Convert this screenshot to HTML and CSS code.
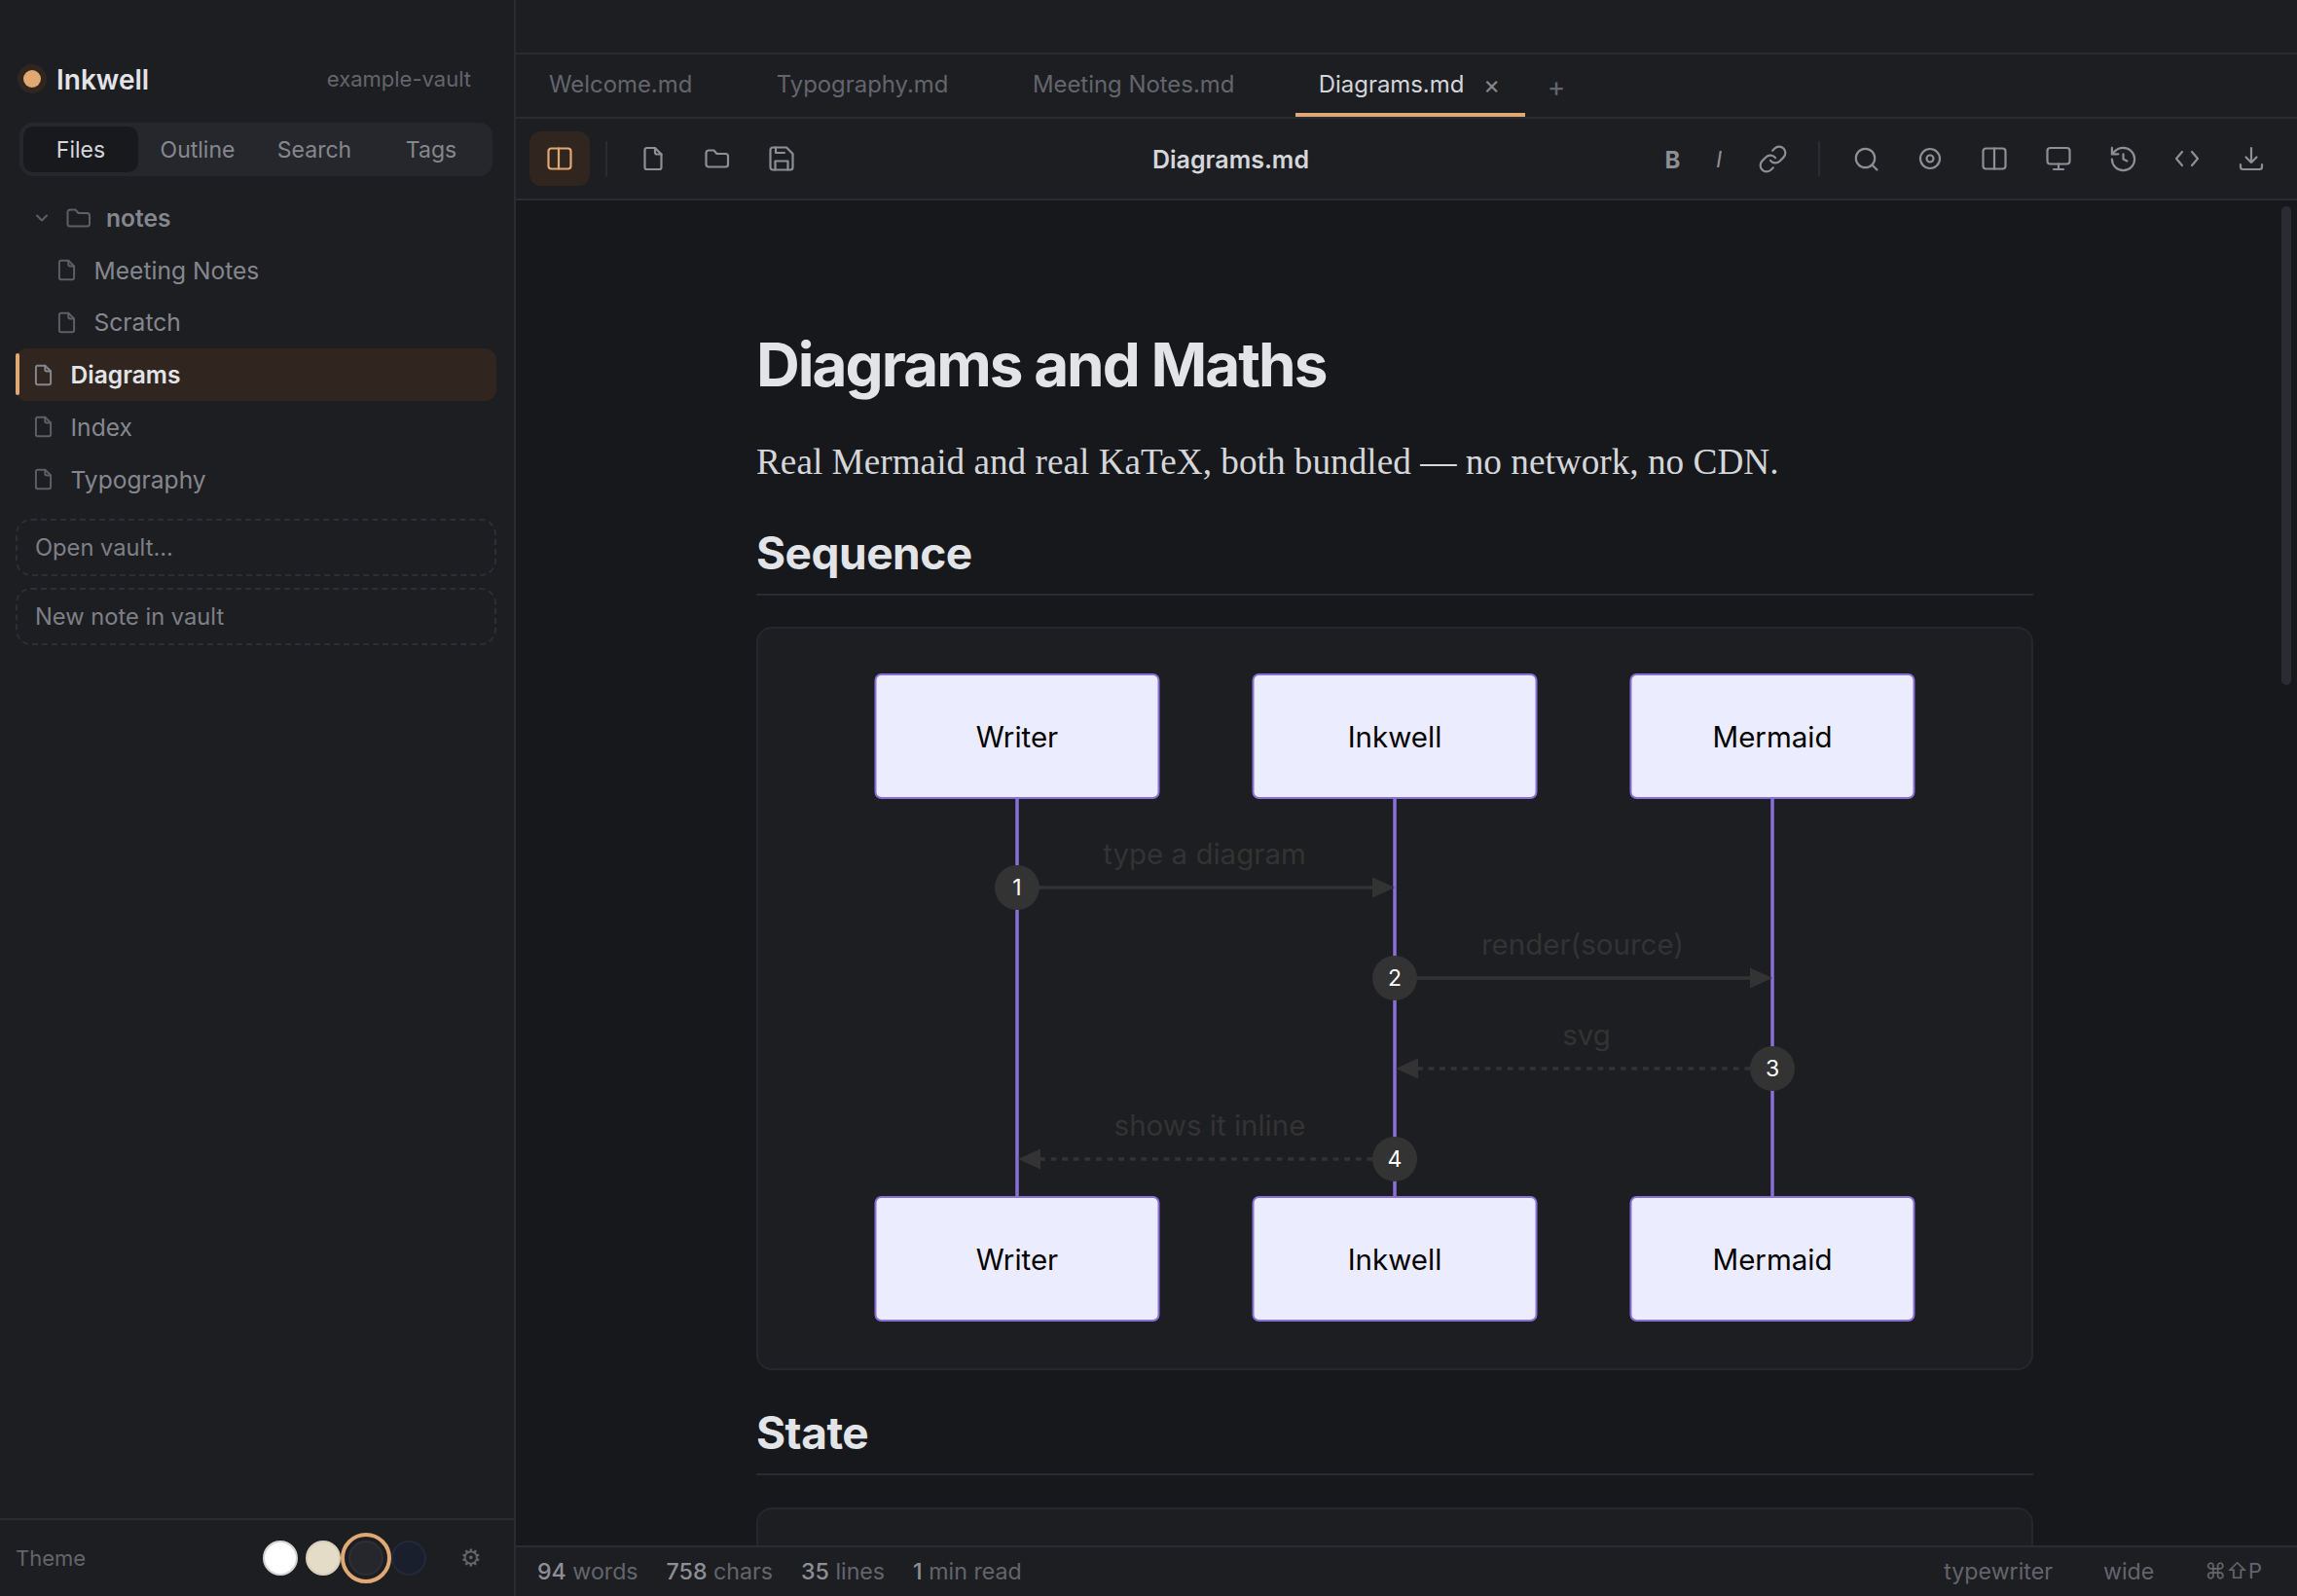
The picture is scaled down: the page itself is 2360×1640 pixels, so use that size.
FILE: index.html
```html
<!DOCTYPE html>
<html lang="en">
<head>
<meta charset="utf-8">
<title>Inkwell</title>
<link rel="stylesheet" href="styles.css">
</head>
<body>
<svg class="defs" width="0" height="0" aria-hidden="true">
  <symbol id="i-file" viewBox="0 0 28 28"><path d="M16 3H7.5a2 2 0 0 0-2 2v18a2 2 0 0 0 2 2h13a2 2 0 0 0 2-2V9.5z"/><path d="M16 3v4.5a2 2 0 0 0 2 2h4.5"/></symbol>
  <symbol id="i-folder" viewBox="0 0 28 28"><path d="M2.5 8A2.5 2.5 0 0 1 5 5.500h5.500l3 3.500h9A2.500 2.500 0 0 1 25 11.500V20a2.500 2.500 0 0 1-2.500 2.500H5A2.500 2.500 0 0 1 2.500 20z"/></symbol>
</svg>
<div class="app">
  <aside class="sidebar">
    <div class="brand">
      <span class="brand-dot"></span>
      <span class="brand-name">Inkwell</span>
      <span class="brand-vault">example-vault</span>
    </div>
    <div class="side-tabs">
      <div class="side-tab is-active">Files</div>
      <div class="side-tab">Outline</div>
      <div class="side-tab">Search</div>
      <div class="side-tab">Tags</div>
    </div>
    <div class="tree">
      <div class="row row-folder">
        <svg class="ic-chev" viewBox="0 0 12 8"><path d="M1 1.500l5 5 5-5"/></svg>
        <svg class="ic-folder"><use href="#i-folder"/></svg>
        <span>notes</span>
      </div>
      <div class="row row-nested"><svg class="ic-file"><use href="#i-file"/></svg><span>Meeting Notes</span></div>
      <div class="row row-nested"><svg class="ic-file"><use href="#i-file"/></svg><span>Scratch</span></div>
      <div class="row is-active"><svg class="ic-file"><use href="#i-file"/></svg><span>Diagrams</span></div>
      <div class="row"><svg class="ic-file"><use href="#i-file"/></svg><span>Index</span></div>
      <div class="row"><svg class="ic-file"><use href="#i-file"/></svg><span>Typography</span></div>
    </div>
    <div class="dashed dashed-first">Open vault...</div>
    <div class="dashed">New note in vault</div>
    <div class="side-foot">
      <span class="theme-label">Theme</span>
      <div class="swatches">
        <span class="swatch sw-white"></span>
        <span class="swatch sw-cream"></span>
        <span class="swatch sw-dark"></span>
        <span class="swatch sw-navy"></span>
      </div>
      <span class="gear">⚙</span>
    </div>
  </aside>
  <main class="main">
    <div class="topstrip"></div>
    <div class="tabbar">
      <div class="tab">Welcome.md<span class="tab-x"></span></div>
      <div class="tab">Typography.md<span class="tab-x"></span></div>
      <div class="tab">Meeting Notes.md<span class="tab-x"></span></div>
      <div class="tab is-active">Diagrams.md<span class="tab-x">×</span></div>
      <div class="tab-add">+</div>
    </div>
    <div class="toolbar">
      <div class="tool-group">
        <div class="tool is-on"><svg class="ico" viewBox="0 0 28 28"><rect x="2.500" y="3.500" width="23" height="21" rx="3"/><path d="M13 3.500v21"/></svg></div>
        <div class="tool-sep"></div>
        <div class="tool"><svg class="ico"><use href="#i-file"/></svg></div>
        <div class="tool"><svg class="ico"><use href="#i-folder"/></svg></div>
        <div class="tool"><svg class="ico" viewBox="0 0 28 28"><path d="M5 2.500h14l6.500 6.500v14a2.500 2.500 0 0 1-2.500 2.500H5A2.500 2.500 0 0 1 2.500 23V5A2.500 2.500 0 0 1 5 2.500z"/><path d="M7.500 25.500v-9h13v9"/><path d="M8 2.500V8h9"/></svg></div>
      </div>
      <div class="doc-title">Diagrams.md</div>
      <div class="tool-group">
        <div class="tool tool-b">B</div>
        <div class="tool tool-i">I</div>
        <div class="tool"><svg class="ico ico-lg" viewBox="0 0 24 24"><path d="M10 13a5 5 0 0 0 7.540.540l3-3a5 5 0 0 0-7.070-7.070l-1.720 1.710"/><path d="M14 11a5 5 0 0 0-7.540-.540l-3 3a5 5 0 0 0 7.070 7.070l1.710-1.710"/></svg></div>
        <div class="tool-sep"></div>
        <div class="tool"><svg class="ico" viewBox="0 0 28 28"><circle cx="13.500" cy="13.500" r="9.700"/><path d="M20.500 20.500l5 5"/></svg></div>
        <div class="tool"><svg class="ico" viewBox="0 0 28 28"><circle cx="14" cy="14" r="10"/><circle cx="14" cy="14" r="3.500"/></svg></div>
        <div class="tool"><svg class="ico" viewBox="0 0 28 28"><rect x="2.500" y="3.500" width="23" height="21" rx="3"/><path d="M14 3.500v21"/></svg></div>
        <div class="tool"><svg class="ico" viewBox="0 0 28 28"><rect x="2.500" y="3" width="23" height="16.500" rx="3"/><path d="M14 19.500V25M9 25h10"/></svg></div>
        <div class="tool"><svg class="ico ico-lg" viewBox="0 0 24 24"><path d="M3 12a9 9 0 1 0 9-9 9.750 9.750 0 0 0-6.740 2.740L3 8"/><path d="M3 3v5h5"/><path d="M12 8v4l3 1.500"/></svg></div>
        <div class="tool"><svg class="ico" viewBox="0 0 28 28"><path d="M9 7l-6 7 6 7M19 7l6 7-6 7"/></svg></div>
        <div class="tool"><svg class="ico" viewBox="0 0 28 28"><path d="M14 3v15M8.500 12.500L14 18l5.500-5.500"/><path d="M3 20v2.500A2.500 2.500 0 0 0 5.500 25h17a2.500 2.500 0 0 0 2.500-2.500V20"/></svg></div>
      </div>
    </div>
    <div class="scroll">
      <article class="doc">
        <h1>Diagrams and Maths</h1>
        <p>Real Mermaid and real KaTeX, both bundled — no network, no CDN.</p>
        <h2>Sequence</h2>
        <div class="card card-seq">
          <svg class="seq" viewBox="0 0 1308 760" width="1308" height="760">
            <line class="life" x1="266" y1="174" x2="266" y2="584"/>
            <line class="life" x1="654" y1="174" x2="654" y2="584"/>
            <line class="life" x1="1042" y1="174" x2="1042" y2="584"/>
            <rect class="actor" x="120.500" y="47" width="291" height="127" rx="6"/>
            <rect class="actor" x="508.500" y="47" width="291" height="127" rx="6"/>
            <rect class="actor" x="896.500" y="47" width="291" height="127" rx="6"/>
            <rect class="actor" x="120.500" y="584" width="291" height="127" rx="6"/>
            <rect class="actor" x="508.500" y="584" width="291" height="127" rx="6"/>
            <rect class="actor" x="896.500" y="584" width="291" height="127" rx="6"/>
            <text class="actor-t" x="266" y="122">Writer</text>
            <text class="actor-t" x="654" y="122">Inkwell</text>
            <text class="actor-t" x="1042" y="122">Mermaid</text>
            <text class="actor-t" x="266" y="659">Writer</text>
            <text class="actor-t" x="654" y="659">Inkwell</text>
            <text class="actor-t" x="1042" y="659">Mermaid</text>
            <text class="msg-t" x="458.500" y="242">type a diagram</text>
            <text class="msg-t" x="847" y="335">render(source)</text>
            <text class="msg-t" x="851" y="428">svg</text>
            <text class="msg-t" x="464" y="521">shows it inline</text>
            <line class="msg" x1="266" y1="266" x2="632" y2="266"/>
            <polygon class="head" points="631,255.500 654,266 631,276.500"/>
            <line class="msg" x1="654" y1="359" x2="1021" y2="359"/>
            <polygon class="head" points="1019,348.500 1042,359 1019,369.500"/>
            <line class="msg msg-dash" x1="677" y1="452" x2="1042" y2="452"/>
            <polygon class="head" points="678,441.500 655,452 678,462.500"/>
            <line class="msg msg-dash" x1="289" y1="545" x2="654" y2="545"/>
            <polygon class="head" points="290,534.500 267,545 290,555.500"/>
            <circle class="num" cx="266" cy="266" r="23"/>
            <circle class="num" cx="654" cy="359" r="23"/>
            <circle class="num" cx="1042" cy="452" r="23"/>
            <circle class="num" cx="654" cy="545" r="23"/>
            <text class="num-t" x="266" y="274">1</text>
            <text class="num-t" x="654" y="367">2</text>
            <text class="num-t" x="1042" y="460">3</text>
            <text class="num-t" x="654" y="553">4</text>
          </svg>
        </div>
        <h2 class="h2-state">State</h2>
        <div class="card card-next"></div>
      </article>
      <div class="thumb"></div>
    </div>
    <div class="status">
      <div class="stat-group">
        <span class="stat"><b>94</b> words</span>
        <span class="stat"><b>758</b> chars</span>
        <span class="stat"><b>35</b> lines</span>
        <span class="stat"><b>1</b> min read</span>
      </div>
      <div class="stat-group stat-right">
        <span class="stat">typewriter</span>
        <span class="stat">wide</span>
        <span class="stat stat-keys">⌘⇧P</span>
      </div>
    </div>
  </main>
</div>
</body>
</html>
```
FILE: styles.css
```css
* { box-sizing: border-box; }
html, body { margin: 0; padding: 0; height: 100%; }
body { background: #17181c; font-family: "Inter", "Liberation Sans", sans-serif; color: #8c8e95; overflow: hidden; }
.defs { position: absolute; }
svg { fill: none; stroke: currentColor; stroke-width: 2.200; stroke-linecap: round; stroke-linejoin: round; }
.app { display: flex; height: 1640px; }

.sidebar { width: 530px; flex: none; display: flex; flex-direction: column; background: #1d1e22; border-right: 2px solid #2b2c33; }
.brand { display: flex; align-items: center; height: 34px; margin-top: 64px; padding: 0 44px 0 24px; }
.brand-dot { width: 18px; height: 18px; border-radius: 50%; background: #e0a872; box-shadow: 0 0 0 6px #30261f; flex: none; }
.brand-name { margin-left: 16px; padding-top: 1px; font-size: 28px; font-weight: 600; color: #e3e4e8; }
.brand-vault { margin-left: auto; font-size: 22px; color: #63656c; }
.side-tabs { display: flex; gap: 2px; height: 55px; margin: 28px 22px 0 20px; padding: 4px; border-radius: 14px; background: #26272c; }
.side-tab { flex: 1; display: flex; align-items: center; justify-content: center; font-size: 23px; color: #85878e; border-radius: 10px; }
.side-tab.is-active { background: #18191d; color: #d5d6da; }

.tree { margin-top: 16px; padding-right: 18px; padding-left: 16px; }
.row { position: relative; display: flex; align-items: center; height: 53.750px; padding-left: 20px; font-size: 24.600px; color: #85878e; border-radius: 12px; }
.row .ic-file { margin-left: -4px; margin-right: 15.500px; color: #5d5f66; }
.ic-file { width: 25px; height: 25px; flex: none; }
.row-nested { padding-left: 44px; }
.row-folder { padding-left: 21px; font-weight: 600; color: #85878e; }
.ic-chev { width: 12px; height: 8px; margin-right: 19.500px; color: #5d5f66; stroke-width: 2; }
.ic-folder { width: 28px; height: 28px; margin-right: 14.500px; margin-left: -2px; color: #5d5f66; stroke-width: 2; }
.row.is-active { background: #30261f; color: #e3e4e8; font-weight: 600; }
.row.is-active .ic-file { color: #85878e; }
.row.is-active::before { content: ""; position: absolute; left: 0; top: 5px; bottom: 6px; width: 4px; border-radius: 2px; background: #e0a872; }

.dashed { display: flex; align-items: center; height: 59px; margin: 12px 18px 0 16px; padding-left: 18px; font-size: 23.700px; color: #7e8087; border: 2px dashed #2e2f35; border-radius: 16px; }
.dashed-first { margin-top: 13.500px; }
.side-foot { display: flex; align-items: center; height: 80px; margin-top: auto; padding: 0 0 0 16px; border-top: 2px solid #2b2c33; }
.theme-label { font-size: 22px; color: #63656c; width: 254px; }
.swatches { display: flex; gap: 8px; }
.swatch { width: 36px; height: 36px; border-radius: 50%; border: 2px solid transparent; }
.sw-white { background: #fff; border-color: #d5d5d2; }
.sw-cream { background: #e5dcc8; border-color: #d8cfbc; }
.sw-dark { background: #26272c; border-color: #2e2f35; outline: 4px solid #e0a872; outline-offset: 4px; }
.sw-navy { background: #1a1f2e; border-color: #23283a; }
.gear { margin-left: 35px; font-size: 24px; color: #63656c; font-family: "DejaVu Sans", sans-serif; }

.main { flex: 1; min-width: 0; display: flex; flex-direction: column; }
.topstrip { height: 56px; flex: none; background: #1d1e22; border-bottom: 2px solid #2b2c33; }
.tabbar { height: 66px; flex: none; display: flex; padding-left: 10px; background: #1d1e22; border-bottom: 2px solid #2b2c33; }
.tab { display: flex; align-items: center; height: 64px; padding: 0 24px; font-size: 23.900px; color: #63656c; border-bottom: 4px solid transparent; }
.tab.is-active { color: #d5d6da; border-bottom-color: #e0a872; }
.tab-x { width: 38.500px; padding-right: 1.500px; text-align: right; font-size: 26px; color: #85878e; }
.tab-add { align-self: center; margin-left: 23px; padding-top: 2px; font-size: 28px; color: #63656c; }

.toolbar { height: 84px; flex: none; display: flex; align-items: center; padding: 0 16px 0 14px; background: #1d1e22; border-bottom: 2px solid #2b2c33; }
.tool-group { display: flex; align-items: center; gap: 4px; }
.tool { width: 62px; height: 56px; display: flex; align-items: center; justify-content: center; border-radius: 12px; color: #8d8f96; }
.tool.is-on { background: #30261f; color: #e0a872; }
.tool-sep { width: 2px; height: 36px; margin: 0 12px; background: #2b2c33; }
.tool-b { width: 47px; padding-top: 2px; font-size: 24px; font-weight: 700; }
.tool-i { width: 40px; padding-top: 2px; font-size: 23px; font-style: italic; }
.ico { width: 28px; height: 28px; }
.ico-lg { width: 31px; height: 31px; stroke-width: 1.700; }
.doc-title { flex: 1; padding-top: 1px; text-align: center; font-size: 25px; font-weight: 600; color: #d5d6da; }

.scroll { position: relative; flex: 1; min-height: 0; overflow: hidden; padding: 133px 24px 0 0; }
.doc { width: 1312px; margin: 0 auto; }
.doc h1 { margin: 0; font-size: 62px; line-height: 72px; font-weight: 700; letter-spacing: -2px; color: #e3e4e8; }
.doc p { margin: 34px 0 0; font-family: "Liberation Serif", serif; font-size: 37.250px; line-height: 60px; color: #d5d6da; }
.doc h2 { margin: 36px 0 0; padding-bottom: 15px; font-size: 46px; line-height: 54px; font-weight: 700; letter-spacing: -0.500px; color: #e3e4e8; border-bottom: 2px solid #2b2c33; }
.doc .h2-state { margin-top: 37px; }
.card { margin-top: 32px; background: #1d1e22; border: 2px solid #26272c; border-radius: 16px; }
.card-seq { height: 764px; }
.card-next { height: 200px; margin-top: 33px; }
.seq { display: block; stroke: none; }
.life { stroke: #8a70d6; stroke-width: 3.500; stroke-linecap: butt; }
.actor { fill: #ececff; stroke: #8a70d6; stroke-width: 2; }
.actor-t { fill: #000; font-size: 29.500px; text-anchor: middle; stroke: none; }
.msg-t { fill: #333; font-size: 29.500px; text-anchor: middle; stroke: none; }
.msg { stroke: #333; stroke-width: 3.400; stroke-linecap: butt; }
.msg-dash { stroke-dasharray: 5.800 5.800; }
.head { fill: #333; stroke: none; }
.num { fill: #333; stroke: none; }
.num-t { fill: #fff; font-size: 23px; text-anchor: middle; stroke: none; }
.thumb { position: absolute; top: 6px; right: 6px; width: 10px; height: 492px; border-radius: 5px; background: #2b2c33; }

.status { height: 52px; flex: none; display: flex; align-items: center; justify-content: space-between; padding: 0 36px 0 22px; background: #1d1e22; border-top: 2px solid #2b2c33; }
.stat-group { display: flex; gap: 29px; }
.stat-group.stat-right { gap: 52px; }
.stat { font-size: 23.200px; color: #63656c; }
.stat-keys { font-size: 22px; }
.stat b { font-weight: 500; color: #8d8f96; }
```
